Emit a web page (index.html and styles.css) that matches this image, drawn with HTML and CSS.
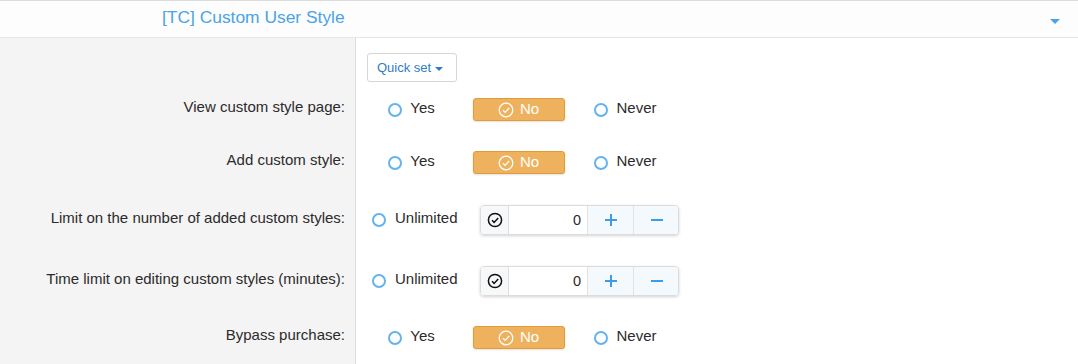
FILE: index.html
```html
<!DOCTYPE html>
<html lang="en">
<head>
  <meta charset="UTF-8" />
  <title>[TC] Custom User Style</title>
  <link rel="stylesheet" href="styles.css">
</head>
<body>
  <div class="panel">
    <div class="panel-head">
      <span class="panel-title">[TC] Custom User Style</span>
      <span class="head-caret"></span>
    </div>

    <div class="form">
      <div class="row row-quick">
        <div class="label"></div>
        <div class="control">
          <button class="quick-set">Quick set <span class="caret"></span></button>
        </div>
      </div>

      <div class="row row-first">
        <div class="label">View custom style page:</div>
        <div class="control choices">
          <label class="choice"><span class="radio"></span><span class="text">Yes</span></label>
          <label class="choice"><span class="btn-on"><svg class="check" viewBox="0 0 16 16"><circle cx="8" cy="8" r="6.8"/><path d="M5 8.3l2.1 2.1L11.2 6"/></svg><span class="text">No</span></span></label>
          <label class="choice"><span class="radio"></span><span class="text">Never</span></label>
        </div>
      </div>

      <div class="row">
        <div class="label">Add custom style:</div>
        <div class="control choices">
          <label class="choice"><span class="radio"></span><span class="text">Yes</span></label>
          <label class="choice"><span class="btn-on"><svg class="check" viewBox="0 0 16 16"><circle cx="8" cy="8" r="6.8"/><path d="M5 8.3l2.1 2.1L11.2 6"/></svg><span class="text">No</span></span></label>
          <label class="choice"><span class="radio"></span><span class="text">Never</span></label>
        </div>
      </div>

      <div class="row row-limit">
        <div class="label">Limit on the number of added custom styles:</div>
        <div class="control limit">
          <label class="unlimited"><span class="radio"></span><span class="text">Unlimited</span></label>
          <div class="spinner">
            <span class="spin-check"><svg class="check dark" viewBox="0 0 16 16"><circle cx="8" cy="8" r="6.6"/><path d="M5 8.3l2.1 2.1L11.2 6"/></svg></span>
            <span class="spin-value">0</span>
            <span class="spin-btn"><svg viewBox="0 0 12 12"><path d="M6 0v12M0 6h12"/></svg></span>
            <span class="spin-btn"><svg viewBox="0 0 12 12"><path d="M0 6h12"/></svg></span>
          </div>
        </div>
      </div>

      <div class="row row-limit">
        <div class="label">Time limit on editing custom styles (minutes):</div>
        <div class="control limit">
          <label class="unlimited"><span class="radio"></span><span class="text">Unlimited</span></label>
          <div class="spinner">
            <span class="spin-check"><svg class="check dark" viewBox="0 0 16 16"><circle cx="8" cy="8" r="6.6"/><path d="M5 8.3l2.1 2.1L11.2 6"/></svg></span>
            <span class="spin-value">0</span>
            <span class="spin-btn"><svg viewBox="0 0 12 12"><path d="M6 0v12M0 6h12"/></svg></span>
            <span class="spin-btn"><svg viewBox="0 0 12 12"><path d="M0 6h12"/></svg></span>
          </div>
        </div>
      </div>

      <div class="row">
        <div class="label">Bypass purchase:</div>
        <div class="control choices">
          <label class="choice"><span class="radio"></span><span class="text">Yes</span></label>
          <label class="choice"><span class="btn-on"><svg class="check" viewBox="0 0 16 16"><circle cx="8" cy="8" r="6.8"/><path d="M5 8.3l2.1 2.1L11.2 6"/></svg><span class="text">No</span></span></label>
          <label class="choice"><span class="radio"></span><span class="text">Never</span></label>
        </div>
      </div>
    </div>
  </div>
</body>
</html>
```

FILE: styles.css
```css
html, body {
  margin: 0;
  padding: 0;
  height: 100vh;
  overflow: hidden;
  font-family: "Liberation Sans", Arial, sans-serif;
  font-size: 15px;
  color: #2b2b2b;
  background: #ffffff;
}

.panel {
  display: flex;
  flex-direction: column;
  height: 100vh;
}

.panel-head {
  display: flex;
  align-items: center;
  justify-content: space-between;
  height: 36px;
  padding: 0 18px 0 162px;
  border-top: 1px solid #dddddd;
  border-bottom: 1px solid #e6e6e6;
  background: #fdfdfd;
}

.panel-title {
  font-size: 17.4px;
  color: #4aa3e6;
  margin-bottom: 3px;
}

.head-caret {
  width: 0;
  height: 0;
  margin-top: 4px;
  border-left: 5px solid transparent;
  border-right: 5px solid transparent;
  border-top: 5px solid #4aa3e6;
}

.form {
  flex: 1;
  padding-top: 15px;
  background: linear-gradient(to right, #f4f4f4 355px, #dddddd 355px, #dddddd 356px, #ffffff 356px);
}

.row {
  display: flex;
  align-items: center;
  margin-top: 30px;
}

.row-quick {
  margin-top: 0;
}

.row-first {
  margin-top: 16px;
}

.row-limit {
  margin-top: 31px;
}

.label {
  width: 356px;
  flex-shrink: 0;
  box-sizing: border-box;
  padding-right: 11px;
  padding-bottom: 5px;
  text-align: right;
  line-height: 16px;
}

.control {
  display: flex;
  align-items: center;
}

.text {
  line-height: 16px;
  margin-bottom: 4px;
}

.row-quick .control {
  padding-left: 11px;
}

.quick-set {
  height: 29px;
  width: 90px;
  padding: 0 0 0 9px;
  text-align: left;
  font-family: inherit;
  font-size: 13px;
  color: #2f7dc0;
  background: #ffffff;
  border: 1px solid #d6d6d6;
  border-radius: 3px;
}

.caret {
  display: inline-block;
  width: 0;
  height: 0;
  vertical-align: middle;
  border-left: 4px solid transparent;
  border-right: 4px solid transparent;
  border-top: 4px solid #2f7dc0;
}

.choices {
  padding-left: 2px;
}

.choice {
  width: 107px;
  display: flex;
  align-items: center;
  justify-content: center;
}

.radio {
  width: 10px;
  height: 10px;
  border: 2px solid #62b3ef;
  border-radius: 50%;
  background: #ffffff;
  margin-right: 8px;
}

.btn-on {
  display: flex;
  align-items: center;
  justify-content: center;
  gap: 6px;
  box-sizing: border-box;
  width: 92px;
  height: 23px;
  color: #ffffff;
  background: #eeb25e;
  border: 1px solid #e59b32;
  border-radius: 3px;
  box-shadow: 0 1px 2px rgba(0, 0, 0, 0.12);
}

.btn-on .text {
  margin-bottom: 2px;
}

.check {
  width: 16px;
  height: 16px;
  fill: none;
  stroke: #ffffff;
  stroke-width: 1.3;
}

.check.dark {
  stroke: #111111;
  stroke-width: 1.5;
}

.limit {
  padding-left: 16px;
}

.unlimited {
  display: flex;
  align-items: center;
  width: 108px;
}

.unlimited .radio {
  margin-right: 9px;
}

.spinner {
  display: flex;
  box-sizing: border-box;
  width: 199px;
  height: 30px;
  border: 1px solid #dcdcdc;
  border-radius: 4px;
  box-shadow: 0 1px 3px rgba(0, 0, 0, 0.18);
  overflow: hidden;
}

.spin-check {
  width: 27px;
  flex-shrink: 0;
  display: flex;
  align-items: center;
  justify-content: center;
  background: #f6f8fa;
  border-right: 1px solid #dddddd;
}

.spin-value {
  width: 72px;
  flex-shrink: 0;
  padding-right: 6px;
  line-height: 28px;
  text-align: right;
  background: #ffffff;
  font-size: 14.5px;
}

.spin-btn {
  width: 45px;
  flex-shrink: 0;
  display: flex;
  align-items: center;
  justify-content: center;
  background: #f4f9fe;
  border-left: 1px solid #e2e2e2;
}

.spin-btn svg {
  width: 12px;
  height: 12px;
  stroke: #3d9be8;
  stroke-width: 2;
}
```
